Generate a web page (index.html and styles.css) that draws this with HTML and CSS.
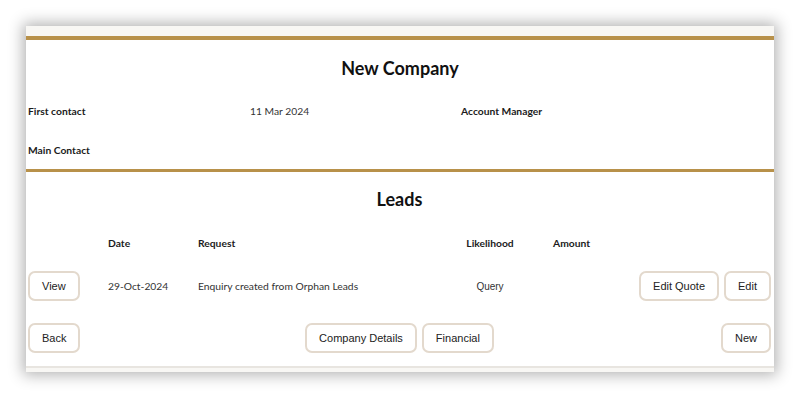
FILE: index.html
```html
<!DOCTYPE html>
<html lang="en">
<head>
  <meta charset="UTF-8">
  <title>New Company</title>
  <link rel="stylesheet" href="styles.css">
</head>
<body>
  <div class="page">
    <div class="panel">
      <div class="topbar"></div>

      <section class="company">
        <h1>New Company</h1>
        <div class="info">
          <span class="label">First contact</span>
          <span class="value">11 Mar 2024</span>
          <span class="label">Account Manager</span>
          <span class="label">Main Contact</span>
        </div>
      </section>

      <section class="leads">
        <h2>Leads</h2>
        <div class="grid head">
          <span></span>
          <span class="label">Date</span>
          <span class="label">Request</span>
          <span class="label center">Likelihood</span>
          <span class="label amount">Amount</span>
          <span></span>
        </div>
        <div class="grid row">
          <button>View</button>
          <span class="value">29-Oct-2024</span>
          <span class="value">Enquiry created from Orphan Leads</span>
          <span class="plain center">Query</span>
          <span></span>
          <div class="actions">
            <button>Edit Quote</button>
            <button>Edit</button>
          </div>
        </div>
        <div class="footer">
          <div><button>Back</button></div>
          <div class="actions">
            <button>Company Details</button>
            <button>Financial</button>
          </div>
          <div class="right"><button>New</button></div>
        </div>
      </section>

      <div class="bottombar"></div>
    </div>
  </div>
</body>
</html>
```

FILE: styles.css
```css
body {
  margin: 0;
  background: #fff;
  font-family: 'Lato', 'Noto Sans', sans-serif;
  color: #1c1c1c;
}
.page {
  padding: 26px;
}
.panel {
  background: #fff;
  box-shadow: 0 0 14px 3px rgba(0,0,0,0.3);
}
.topbar {
  height: 10px;
  background: #f8f7f4;
  border-bottom: 4px solid #b8914a;
}
.company {
  padding: 17px 2px 12px;
  border-bottom: 3px solid #b8914a;
}
h1, h2 {
  margin: 0;
  text-align: center;
  font-size: 18px;
  line-height: 22px;
  font-weight: 700;
  color: #111;
}
.info {
  display: grid;
  grid-template-columns: 222px 211px 1fr;
  row-gap: 25px;
  margin-top: 25px;
}
.label {
  font-size: 10.3px;
  line-height: 14px;
  font-weight: 700;
  color: #1c1c1c;
}
.value {
  font-size: 10.3px;
  line-height: 14px;
  color: #333;
}
.plain {
  font-family: 'Liberation Sans', Arial, sans-serif;
  font-size: 10px;
  color: #333;
}
.leads {
  padding: 16px 3px 13px 2px;
}
.grid {
  display: grid;
  grid-template-columns: 80px 90px 242px 100px 1fr auto;
  align-items: center;
}
.head {
  margin-top: 26px;
}
.row {
  margin-top: 21px;
}
.center {
  text-align: center;
}
.amount {
  padding-left: 13px;
}
.actions {
  display: flex;
  gap: 5px;
}
.footer {
  display: grid;
  grid-template-columns: 1fr auto 1fr;
  margin-top: 22px;
}
.right {
  display: flex;
  justify-content: flex-end;
}
button {
  height: 30px;
  padding: 0 12px;
  font-family: 'Liberation Sans', Arial, sans-serif;
  font-size: 11px;
  color: #222;
  background: #fff;
  border: 2px solid #e3d9cd;
  border-radius: 7px;
  cursor: pointer;
}
.row > button {
  justify-self: start;
}
.bottombar {
  height: 4px;
  background: #f8f7f4;
  border-top: 2px solid #e8e5e0;
}
```
